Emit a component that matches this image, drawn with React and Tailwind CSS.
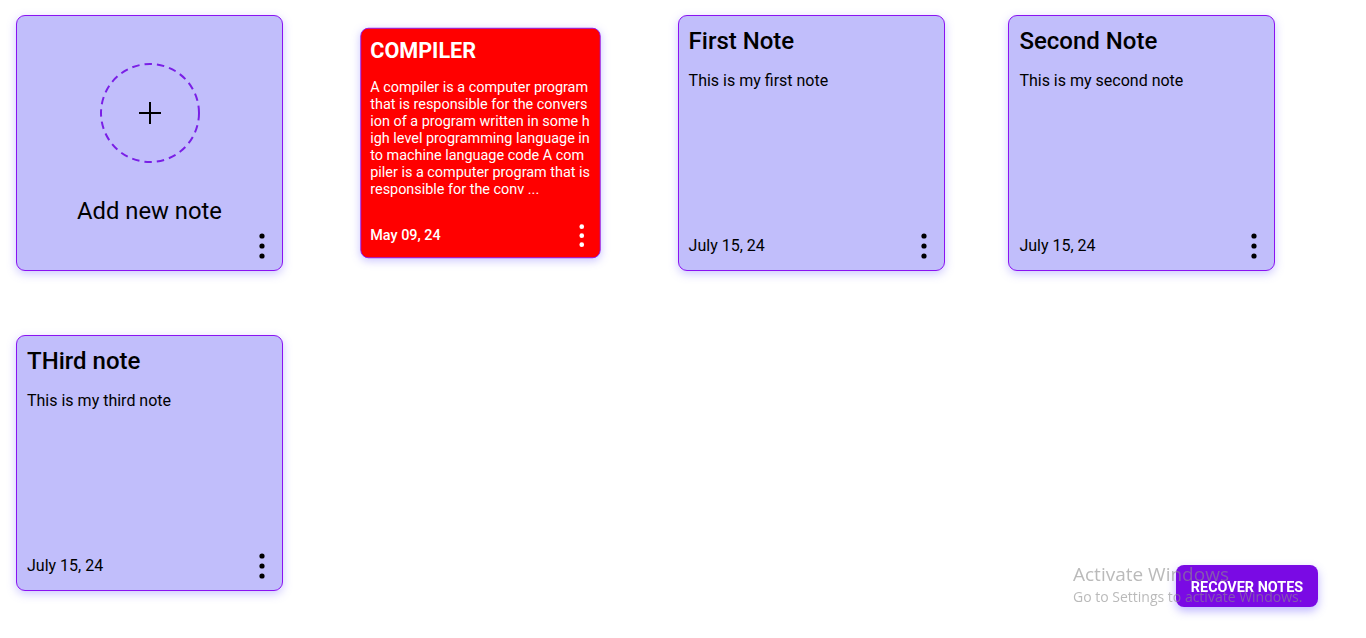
import React from "react";

function Dots({ color = "#000" }) {
  return (
    <svg width="20" height="26" viewBox="0 0 20 26" className="shrink-0">
      <circle cx="10" cy="3" r="2.6" fill={color} />
      <circle cx="10" cy="13" r="2.6" fill={color} />
      <circle cx="10" cy="23" r="2.6" fill={color} />
    </svg>
  );
}

function NoteCard({ title, body, date }) {
  return (
    <div className="w-[267px] h-[256px] bg-[#c1befb] border border-[#8a12f2] rounded-[9px] shadow-[0_3px_10px_rgba(110,95,255,0.35)] px-[10px] pt-[11px] pb-[12px] flex flex-col text-black">
      <div className="text-[24px] leading-[28px] font-medium">{title}</div>
      <div className="mt-[14px] text-[16px] leading-[24px]">{body}</div>
      <div className="mt-auto h-6 flex items-center justify-between">
        <span className="text-[16px] leading-[24px]">{date}</span>
        <Dots />
      </div>
    </div>
  );
}

export default function App() {
  const compilerText =
    "A compiler is a computer program that is responsible for the conversion of a program written in some high level programming language into machine language code A compiler is a computer program that is responsible for the conv ...";
  return (
    <div className="min-h-[638px] bg-white font-['Roboto',sans-serif] pt-[15px] pl-[16px]">
      <div className="grid grid-cols-[repeat(4,267px)] auto-rows-[256px] gap-x-[63.8px] gap-y-16">
        {/* Add new note */}
        <div className="w-[267px] h-[256px] bg-[#c1befb] border border-[#8a12f2] rounded-[9px] shadow-[0_3px_10px_rgba(110,95,255,0.35)] px-[10px] pt-[10px] pb-[12px] flex flex-col items-center text-black">
          <div className="mt-[37px] w-[100px] h-[100px] relative flex items-center justify-center">
            <svg width="100" height="100" viewBox="0 0 100 100" className="absolute inset-0">
              <circle cx="50" cy="50" r="49" fill="none" stroke="#7a1fe6" strokeWidth="2" strokeDasharray="7.5 5" />
            </svg>
            <svg width="24" height="24" viewBox="0 0 24 24" className="relative">
              <path d="M12 1v22M1 12h22" stroke="#000" strokeWidth="2" fill="none" />
            </svg>
          </div>
          <div className="mt-[34px] text-[23.8px] leading-[28px]">Add new note</div>
          <div className="mt-auto h-6 w-full flex items-center justify-end">
            <Dots />
          </div>
        </div>

        {/* Compiler (hover-scaled) */}
        <div className="w-[267px] h-[256px] scale-90 bg-[#ff0000] border border-[#8a12f2] rounded-[9px] shadow-[0_3px_10px_rgba(110,95,255,0.35)] px-[10px] pt-[11px] pb-[12px] flex flex-col text-white">
          <div className="text-[24px] leading-[28px] font-bold">COMPILER</div>
          <div className="mt-[16px] text-[16px] leading-[19px] break-all">{compilerText}</div>
          <div className="mt-auto h-6 flex items-center justify-between">
            <span className="text-[16px] leading-[24px] font-medium">May 09, 24</span>
            <Dots color="#fff" />
          </div>
        </div>

        <NoteCard title="First Note" body="This is my first note" date="July 15, 24" />
        <NoteCard title="Second Note" body="This is my second note" date="July 15, 24" />
        <NoteCard title="THird note" body="This is my third note" date="July 15, 24" />
      </div>

      <button className="fixed right-[48px] bottom-[31px] w-[142px] h-[42px] pt-[4px] rounded-[8px] bg-[#7a0ae4] text-white text-[14.4px] leading-[18px] font-bold shadow-[0_4px_10px_rgba(110,95,255,0.45)] font-['Roboto',sans-serif]">
        RECOVER NOTES
      </button>

      <div className="fixed left-[1073px] top-[561px] pointer-events-none text-[rgba(140,140,140,0.6)] font-['Open_Sans',sans-serif]">
        <div className="text-[19px] leading-[26px]">Activate Windows</div>
        <div className="text-[14px] leading-[20px]">Go to Settings to activate Windows.</div>
      </div>
    </div>
  );
}
